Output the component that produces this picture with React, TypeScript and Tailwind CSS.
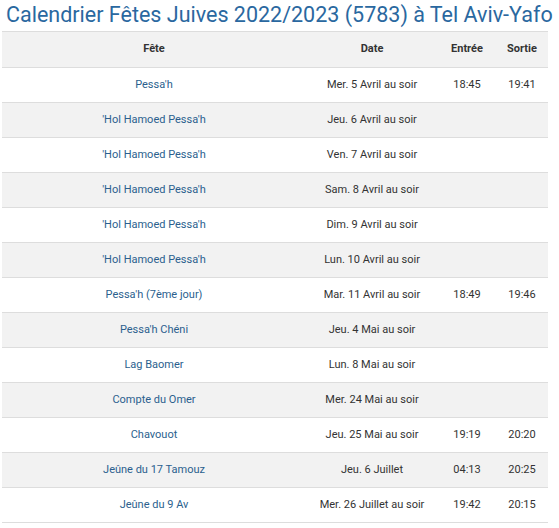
const rows = [
  { name: "Pessa'h", date: "Mer. 5 Avril au soir", entree: "18:45", sortie: "19:41" },
  { name: "'Hol Hamoed Pessa'h", date: "Jeu. 6 Avril au soir", entree: "", sortie: "" },
  { name: "'Hol Hamoed Pessa'h", date: "Ven. 7 Avril au soir", entree: "", sortie: "" },
  { name: "'Hol Hamoed Pessa'h", date: "Sam. 8 Avril au soir", entree: "", sortie: "" },
  { name: "'Hol Hamoed Pessa'h", date: "Dim. 9 Avril au soir", entree: "", sortie: "" },
  { name: "'Hol Hamoed Pessa'h", date: "Lun. 10 Avril au soir", entree: "", sortie: "" },
  { name: "Pessa'h (7ème jour)", date: "Mar. 11 Avril au soir", entree: "18:49", sortie: "19:46" },
  { name: "Pessa'h Chéni", date: "Jeu. 4 Mai au soir", entree: "", sortie: "" },
  { name: "Lag Baomer", date: "Lun. 8 Mai au soir", entree: "", sortie: "" },
  { name: "Compte du Omer", date: "Mer. 24 Mai au soir", entree: "", sortie: "" },
  { name: "Chavouot", date: "Jeu. 25 Mai au soir", entree: "19:19", sortie: "20:20" },
  { name: "Jeûne du 17 Tamouz", date: "Jeu. 6 Juillet", entree: "04:13", sortie: "20:25" },
  { name: "Jeûne du 9 Av", date: "Mer. 26 Juillet au soir", entree: "19:42", sortie: "20:15" },
];

export default function App() {
  return (
    <div className="w-[559px] bg-white font-['Roboto',sans-serif]">
      <h1 className="h-[31px] pl-[6px] text-[21.5px] leading-[30px] font-normal text-[#2a68a0] whitespace-nowrap">
        Calendrier Fêtes Juives 2022/2023 (5783) à Tel Aviv-Yafo
      </h1>
      <table className="ml-[2px] w-[546px] border-collapse table-fixed text-[11px] text-[#333333]">
        <colgroup>
          <col className="w-[304px]" />
          <col className="w-[132px]" />
          <col className="w-[58px]" />
          <col className="w-[52px]" />
        </colgroup>
        <thead>
          <tr className="h-[36px] bg-[#f2f2f2] border-y border-[#dddddd]">
            <th className="font-bold text-center">Fête</th>
            <th className="font-bold text-center">Date</th>
            <th className="font-bold text-center">Entrée</th>
            <th className="font-bold text-center">Sortie</th>
          </tr>
        </thead>
        <tbody>
          {rows.map((r, i) => (
            <tr
              key={i}
              className={`h-[35px] border-b border-[#dddddd] ${i % 2 === 1 ? "bg-[#f2f2f2]" : "bg-white"}`}
            >
              <td className="text-center text-[#2b5f8e]">{r.name}</td>
              <td className="text-center">{r.date}</td>
              <td className="text-center">{r.entree}</td>
              <td className="text-center">{r.sortie}</td>
            </tr>
          ))}
        </tbody>
      </table>
    </div>
  );
}
